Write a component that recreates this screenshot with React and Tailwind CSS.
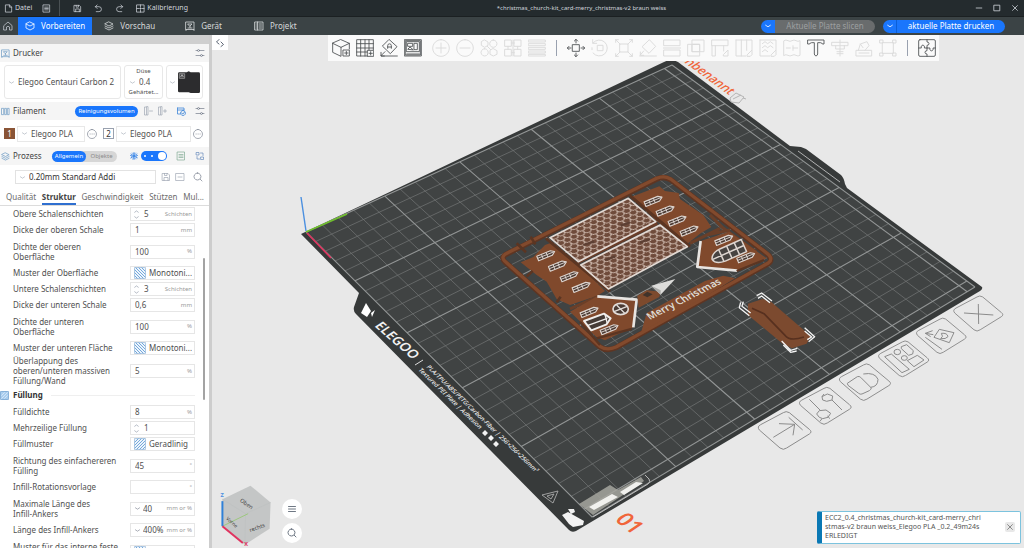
import React from "react";
import clsx from "clsx";

const TOOL_ICONS = {
  addCube: "M27 2 52 13 27 25 2 13ZM2 13V40L27 52V25M52 13V30M34 33H52V51H34ZM43 37V47M38 42H48",
  addPlate: "M34 51H2V2H52V32M14 2V51M27 2V51M39 2V32M2 14H52M2 27H52M2 39H34M35 34H53V52H35ZM44 38V48M39 43H49",
  orient: "M28 2 51 23 31 44 8 22ZM23 28V20A5 5 0 0 1 34 20V28M23 24H34M4 51H52M15 38 3 50M3 40V51H13",
  arrange: "M2 2H52V51H2ZM8 8H46V38H8ZM8 45H46M12 13H26V22H12ZM31 13H40V32H31ZM12 30 18 24 27 32ZM5 5H49V48H5Z",
  plus: "M27 2A25 25 0 1 1 26.9 2ZM27 12V42M12 27H42",
  minus: "M27 2A25 25 0 1 1 26.9 2ZM12 27H42",
  copies: "M14 3 24 9V19L14 25 4 19V9ZM40 3A11 11 0 1 1 39.9 3ZM14 29A11 11 0 1 1 13.9 29ZM40 29 51 35V46L40 51 30 46V35ZM22 22 32 32",
  split: "M3 3H22V22H3ZM31 3H51V22H31ZM3 31H22V51H3ZM31 31H51V51H31ZM22 12H31M22 41H31M12 22V31M41 22V31M27 3V51",
  layers: "M2 3H52V9H2ZM2 14H52V20H2ZM2 25H52V31H2ZM2 36H52V42H2ZM2 46H52V51H2Z",
  move: "M17 17H37V37H17ZM27 12V1M22 6 27 1 32 6M27 42V53M22 48 27 53 32 48M12 27H1M6 22 1 27 6 32M42 27H53M48 22 53 27 48 32",
  rotate: "M20 19H36V35H20ZM6 12A24 24 0 1 1 6 42M5 2V13H17M3 26V32",
  scale: "M15 15H39V39H15ZM15 15 2 2M2 10V2H10M39 15 52 2M44 2H52V10M15 39 2 52M2 44V52H10M39 39 52 52M44 52H52V44",
  flat: "M32 3 50 22 30 43 10 24ZM2 51H52M14 36 4 48M4 39V49H14",
  cut: "M3 3H51V20H3ZM3 33H51V51H3ZM1 27H53",
  boolean: "M16 3H51V38H16ZM3 16H38V51H3ZM16 16H38V38H16Z",
  support: "M3 3H51V20H3ZM3 20V51H13V20M38 20V36M38 46 51 33V51H38Z",
  seam: "M3 3H51V32M3 3V51H32M19 3V51M35 3V34M37 47 51 33V47L46 52H37Z",
  paint: "M3 3H51V32M3 3V51H32M10 14 18 8 26 14 34 8 42 14M10 26 18 20 26 26 34 20 42 26M10 38 18 32 26 38M37 47 51 33V47L46 52H37Z",
  fuzzy: "M3 5Q9 1 15 5T27 5T39 5T51 5V49Q45 53 39 49T27 49T15 49T3 49ZM10 27H22M30 27H44M30 20V34",
  text: "M3 3H51V15H46Q45 11 40 11H32V45Q32 49 27 51Q22 49 22 45V11H14Q9 11 8 15H3Z",
  measure: "M27 3V51M3 10H51V20H3ZM14 20V30H40V20M18 38H36M18 44H36",
  assembly: "M4 34H50V51H4ZM10 34 16 15 36 8 42 20 30 34M16 15 24 26M12 42H42",
  brim: "M11 11H43V43H11ZM3 3H12V12H3ZM42 3H51V12H42ZM3 42H12V51H3ZM42 42H51V51H42Z",
  puzzle: "M6 2H48Q52 2 52 6V48Q52 52 48 52H6Q2 52 2 48V6Q2 2 6 2ZM27 2V9A6 5 0 1 1 27 19V27M2 27H10A5 6 0 1 1 19 27H36A5 6 0 1 0 45 27H52M27 27V35A6 5 0 1 0 27 45V52",
};

const TOOL_GROUPS = [
  [["addCube", "Objekt hinzufügen", 1], ["addPlate", "Platte hinzufügen", 1], ["orient", "Ausrichten", 1], ["arrange", "Anordnen", 1]],
  [["plus", "Mehr"], ["minus", "Weniger"], ["copies", "Kopien"], ["split", "Teilen"], ["layers", "Schichthöhe"]],
  [
    ["move", "Bewegen", 1], ["rotate", "Drehen"], ["scale", "Skalieren"], ["flat", "Auf Fläche legen"], ["cut", "Schneiden"],
    ["boolean", "Boolesch"], ["support", "Stützen malen"], ["seam", "Naht malen"], ["paint", "Farbe malen"], ["fuzzy", "Fuzzy Skin"],
    ["text", "Text", 1], ["measure", "Messen"], ["assembly", "Montage"], ["brim", "Brim"],
  ],
  [["puzzle", "Baugruppe", 1]],
];

const SETTINGS = [
  { label: "Obere Schalenschichten", value: "5", unit: "Schichten", kind: "spin" },
  { label: "Dicke der oberen Schale", value: "1", unit: "mm" },
  { label: "Dichte der oberen Oberfläche", value: "100", unit: "%", lines: 2 },
  { label: "Muster der Oberfläche", value: "Monotoni...", kind: "pattern" },
  { label: "Untere Schalenschichten", value: "3", unit: "Schichten", kind: "spin" },
  { label: "Dicke der unteren Schale", value: "0,6", unit: "mm" },
  { label: "Dichte der unteren Oberfläche", value: "100", unit: "%", lines: 2 },
  { label: "Muster der unteren Fläche", value: "Monotoni...", kind: "pattern" },
  { label: "Überlappung des oberen/unteren massiven Füllung/Wand", value: "5", unit: "%", lines: 3 },
  { section: "Füllung" },
  { label: "Fülldichte", value: "8", unit: "%" },
  { label: "Mehrzeilige Füllung", value: "1", kind: "spin" },
  { label: "Füllmuster", value: "Geradlinig", kind: "pattern", flip: true },
  { label: "Richtung des einfachereren Fülling", value: "45", unit: "°", lines: 2 },
  { label: "Infill-Rotationsvorlage", value: "", unit: "°" },
  { label: "Maximale Länge des\nInfill-Ankers", value: "40", unit: "mm or %", kind: "combo", lines: 2 },
  { label: "Länge des Infill-Ankers", value: "400%", unit: "mm or %", kind: "combo" },
  { label: "Muster für das interne feste Füllung", value: "Monotoni...", kind: "pattern", lines: 2 },
];

function Icon({ d, size = "size-[10px]", box = 20, sw = 1.6, className }) {
  return (
    <svg viewBox={`0 0 ${box} ${box}`} className={clsx(size, "shrink-0", className)} fill="none" stroke="currentColor" strokeWidth={sw} strokeLinejoin="round" strokeLinecap="round" aria-hidden="true">
      <path d={d} />
    </svg>
  );
}

function IconButton({ label, className, ...icon }) {
  return (
    <button type="button" aria-label={label} className={clsx("flex items-center justify-center", className)}>
      <Icon {...icon} />
    </button>
  );
}

const D = {
  file: "M4 2H12L17 7V18H4ZM12 2V7H17",
  list: "M3 2H17V18H3ZM6 7H14M6 10H14M6 13H14",
  save: "M3 3H14L17 6V17H3ZM6 17V11H14V17M7 3V7H12V3",
  undo: "M7 2 3 6 7 10M3 6H11A5 5 0 0 1 11 17H5",
  redo: "M13 2 17 6 13 10M17 6H9A5 5 0 0 0 9 17H15",
  calib: "M2 2H18V18H2ZM10 2V7M10 13V18M2 10H7M13 10H18M10 9V11M9 10H11",
  home: "M2 9 10 2 18 9V18H13V12Q10 9 7 12V18H2Z",
  cube: "M10 2 18 6V14L10 18 2 14V6ZM2 6 10 10 18 6",
  stack: "M10 2 18 6 10 10 2 6ZM2 10 10 14 18 10M2 14 10 18 18 14",
  device: "M2 2H18V17H2ZM6 6H14L10 10ZM10 10V13M6 14H14M2 17V19M18 17V19",
  project: "M2 2H18V18H2ZM7 2V18M10 6H15M10 10H15M10 14H15M4 6H5M4 10H5M4 14H5",
  chev: "M4 8 10 12 16 8",
  sliders: "M2 5H5M9 5A2 2 0 1 0 5 5 2 2 0 1 0 9 5M9 5H18M2 15H11M15 15A2 2 0 1 0 11 15 2 2 0 1 0 15 15M15 15H18",
  filament: "M2 3H6V17H2ZM9 3H12V17H9ZM15 3H18V17H15Z",
  remove: "M6 2H3V18H6M10 2V18H7V2ZM13 10H19",
  add: "M6 2H3V18H6M10 2V18H7V2ZM13 10H19M16 7V13",
  sync: "M3 4H16V8M3 4V16H8M3 8H16M14 9A5 5 0 1 1 13.9 9ZM11 14 14 16 17 12",
  swap: "M3 3H8V8H3ZM12 12H17V17H12ZM11 4H16V9M9 16H4V11",
  more: "M10 1A9 9 0 1 1 9.9 1ZM6 10H6.5M10 10H10.5M14 10H14.5",
  minusBox: "M2 3H18V17H2ZM6 10H14",
  search: "M9 2A7 7 0 1 1 8.9 2ZM14 14 18 18",
  flower: "M10 10 10 3M10 10 16 6M10 10 16 14M10 10V17M10 10 4 14M10 10 4 6M7 4 10 7 13 4M7 16 10 13 13 16M3 9 7 10 4 13M17 9 13 10 16 13",
  x: "M4 4 16 16M16 4 4 16",
};

function TitleBar() {
  return (
    <header className="flex h-4 shrink-0 items-center bg-[#242b2e] text-[7px] text-gray-300">
      <div className="flex h-full items-center pl-1">
        <button type="button" className="flex items-center gap-[2px]"><Icon d={D.file} size="size-[9px]" />Datei</button>
        <IconButton label="Menü" d={D.list} size="size-[9px]" className="ml-[10px]" />
        <span className="mr-[13px] ml-2 h-full w-px bg-[#4a5154]" />
        <IconButton label="Speichern" d={D.save} size="size-[9px]" />
        <IconButton label="Rückgängig" d={D.undo} size="size-[9px]" className="ml-3" />
        <IconButton label="Wiederholen" d={D.redo} size="size-[9px]" className="ml-3" />
        <button type="button" className="ml-3 flex items-center gap-[2px]"><Icon d={D.calib} size="size-[9px]" />Kalibrierung</button>
      </div>
      <h1 className="min-w-0 flex-1 truncate text-center text-[6px] leading-[12px]">*christmas_church-kit_card-merry_christmas-v2 braun weiss</h1>
      <div className="flex items-center gap-[10px] pr-[5px]">
        <IconButton label="Minimieren" d="M3 10H17" size="size-[8px]" sw={2} />
        <IconButton label="Maximieren" d="M3 3H17V17H3Z" size="size-[8px]" sw={2} />
        <IconButton label="Schließen" d={D.x} size="size-[8px]" sw={2} />
      </div>
    </header>
  );
}

function MainNav() {
  const tab = "flex items-center gap-[6px] self-stretch text-[#d5d9da]";
  return (
    <nav className="flex h-[19px] shrink-0 items-center border-t border-[#1b2022] bg-[#3b4345] text-[8px]">
      <IconButton label="Start" d={D.home} className="w-[18px] pr-[3px] text-gray-300" sw={1.4} />
      <button type="button" className={clsx(tab, "bg-[#1a76fc] pr-[7px] pl-[7px] text-white")}><Icon d={D.cube} />Vorbereiten</button>
      <button type="button" className={clsx(tab, "ml-3")}><Icon d={D.stack} />Vorschau</button>
      <button type="button" className={clsx(tab, "ml-[30px]")}><Icon d={D.device} />Gerät</button>
      <button type="button" className={clsx(tab, "ml-8")}><Icon d={D.project} />Projekt</button>
      <div className="ml-auto flex gap-2 pr-[19px]">
        <div className="flex h-[13px] w-[114px] overflow-hidden rounded-full">
          <IconButton label="Slice-Optionen" d={D.chev} size="size-[8px]" sw={2} className="w-[14px] bg-[#1a76fc] text-white" />
          <button type="button" disabled className="flex-1 bg-[#696c6d] text-[#9c9fa0]">Aktuelle Platte slicen</button>
        </div>
        <div className="flex h-[13px] w-[122px] overflow-hidden rounded-full bg-[#1a76fc] text-white">
          <IconButton label="Druckoptionen" d={D.chev} size="size-[8px]" sw={2} className="w-[14px] border-r border-[#0c5fd6]" />
          <button type="button" className="flex-1">aktuelle Platte drucken</button>
        </div>
      </div>
    </nav>
  );
}

function PanelHeader({ icon, title, children }) {
  return (
    <div className="flex h-[18px] shrink-0 items-center bg-[#f5f5f5] pr-[4px] pl-[1px]">
      <Icon d={icon} className="text-[#6f9cc4]" size="size-[9px]" />
      <h2 className="ml-[3px] text-[8px] text-[#444]">{title}</h2>
      <div className="ml-auto flex items-center">{children}</div>
    </div>
  );
}

function Select({ label, value, className }) {
  return (
    <div className={clsx("flex min-w-0 items-center", className)}>
      <Icon d={D.chev} size="size-[7px]" className="mr-[3px] text-gray-400" />
      <select aria-label={label} className="min-w-0 flex-1 appearance-none truncate bg-transparent outline-none">
        <option>{value}</option>
      </select>
    </div>
  );
}

function PatternSwatch({ flip }) {
  return (
    <svg viewBox="0 0 36 36" className={clsx("size-3 shrink-0", flip && "-scale-x-100")} aria-hidden="true">
      <rect x="1" y="1" width="34" height="34" rx="3" fill="#eef5fc" stroke="#7ca6cf" strokeWidth="2" />
      <path d="M2 26 10 34M2 17 19 34M2 8 28 34M5 2 34 31M14 2 34 22M23 2 34 13" stroke="#5f9bd6" strokeWidth="2.6" />
    </svg>
  );
}

function SettingRow({ label, value, unit, kind, lines = 1, flip }) {
  const id = label.replace(/\W+/g, "-");
  return (
    <div className={clsx("flex shrink-0 items-center", lines === 1 && "h-4", lines === 2 && "h-[27px]", lines === 3 && "h-[30px]")}>
      <label htmlFor={id} className="w-[117px] shrink-0 pr-[6px] leading-[10px] whitespace-pre-line">{label}</label>
      <div className="flex h-[14px] min-w-0 flex-1 items-center border border-[#e6e6e6] bg-white pr-[2px] pl-[4px]">
        {kind === "spin" && <Icon d="M6 5 10 2 14 5M6 15 10 18 14 15" size="size-[9px]" className="mr-[3px] -ml-[3px] text-gray-400" />}
        {kind === "combo" && <Icon d={D.chev} size="size-[7px]" className="mr-[2px] -ml-px text-gray-500" />}
        {kind === "pattern" ? (
          <>
            <span className="mr-[3px] -ml-px"><PatternSwatch flip={flip} /></span>
            <select id={id} className="min-w-0 flex-1 appearance-none bg-transparent outline-none"><option>{value}</option></select>
          </>
        ) : (
          <input id={id} defaultValue={value} className="min-w-0 flex-1 bg-transparent outline-none" />
        )}
        {unit && <span className="shrink-0 text-[6px] text-[#999]">{unit}</span>}
      </div>
    </div>
  );
}

function Sidebar() {
  return (
    <aside className="flex w-[212px] shrink-0 flex-col overflow-hidden border-r-[3px] border-[#cdcdcd] bg-white text-[8px] text-[#505050]">
      <div className="h-[9px] shrink-0 bg-[#cfcfcf]" />
      <PanelHeader icon={D.device} title="Drucker">
        <IconButton label="Druckereinstellungen" d={D.sliders} className="text-gray-500" sw={1.3} />
      </PanelHeader>
      <div className="flex h-10 shrink-0 items-stretch gap-[3px] py-[3px] pr-[6px] pl-[4px]">
        <Select label="Drucker" value="Elegoo Centauri Carbon 2" className="flex-1 rounded-[3px] border border-[#e8e8e8] pl-[3px]" />
        <div className="flex w-[39px] shrink-0 flex-col items-center justify-between rounded-[3px] border border-[#e8e8e8] py-px">
          <span className="text-[6px] leading-[9px]">Düse</span>
          <Select label="Düse" value="0.4" className="w-[29px] leading-[10px]" />
          <span className="text-[6px] leading-[9px]">Gehärtet...</span>
        </div>
        <button type="button" aria-label="Plattentyp" className="flex w-[37px] shrink-0 items-center justify-between rounded-[3px] border border-[#e8e8e8] px-[2px]">
          <Icon d={D.chev} size="size-[7px]" className="text-gray-400" />
          <svg viewBox="0 0 66 68" className="w-[22px]" aria-hidden="true">
            <path d="M4 4H26L32 1 38 4H62Q66 4 66 8V62Q66 66 62 66H38L32 64H4Q0 64 0 60V8Q0 4 4 4Z" fill="#2c2c2e" />
            <path d="M4 8H20V22H4Z" fill="#4a4a4c" stroke="#aaa" strokeWidth="2" />
            <path d="M8 18 12 11 16 18" stroke="#ddd" strokeWidth="2" fill="none" />
          </svg>
        </button>
      </div>

      <PanelHeader icon={D.filament} title="Filament">
        <button type="button" className="h-[11px] w-[63px] rounded-full bg-[#1a76fc] text-[6px] text-white">Reinigungsvolumen</button>
        <IconButton label="Filament entfernen" d={D.remove} className="ml-[5px] text-gray-400" sw={1.3} />
        <IconButton label="Filament hinzufügen" d={D.add} className="ml-1 text-gray-400" sw={1.3} />
        <IconButton label="Synchronisieren" d={D.sync} className="ml-[9px] text-[#3f86d8]" />
        <IconButton label="Filamenteinstellungen" d={D.sliders} className="ml-[9px] text-gray-500" sw={1.3} />
      </PanelHeader>
      <div className="flex h-[27px] shrink-0 items-center pr-[6px] pl-[4px]">
        <span className="flex size-[11px] items-center justify-center bg-[#8a5436] text-white">1</span>
        <Select label="Filament 1" value="Elegoo PLA" className="ml-[2px] h-4 w-[68px] border border-[#e8e8e8] pl-[3px]" />
        <IconButton label="Filament 1 bearbeiten" d={D.more} className="ml-[2px] text-gray-500" sw={1.2} />
        <span className="ml-[6px] flex size-[11px] items-center justify-center border border-gray-400 text-[#333]">2</span>
        <Select label="Filament 2" value="Elegoo PLA" className="ml-[2px] h-4 flex-1 border border-[#e8e8e8] pl-[3px]" />
        <IconButton label="Filament 2 bearbeiten" d={D.more} className="ml-[2px] text-gray-500" sw={1.2} />
      </div>

      <PanelHeader icon={D.stack} title="Prozess">
        <div className="flex h-[11px] w-[65px] rounded-full bg-[#d6d6d6] text-[6px]">
          <button type="button" className="w-[34px] rounded-full bg-[#1a76fc] text-white">Allgemein</button>
          <button type="button" className="flex-1 text-[#8b8b8b]">Objekte</button>
        </div>
        <Icon d={D.flower} className="ml-3 text-[#2f7fe6]" />
        <label className="ml-[2px] flex h-[10px] w-[26px] items-center justify-end gap-[5px] rounded-full bg-[#1a76fc] pr-px">
          <input type="checkbox" defaultChecked aria-label="Erweiterte Einstellungen" className="sr-only" />
          <span className="size-[2px] rounded-full bg-white" />
          <span className="size-[2px] rounded-full bg-white" />
          <span className="size-2 rounded-full bg-white" />
        </label>
        <IconButton label="Vergleichen" d={D.list} className="ml-[9px] text-[#79a58c]" sw={1.3} />
        <IconButton label="Tauschen" d={D.swap} className="ml-[9px] text-[#5c84b8]" sw={1.3} />
      </PanelHeader>
      <div className="flex h-6 shrink-0 items-center pr-[6px] pl-[15px]">
        <Select label="Profil" value="0.20mm Standard Addi" className="h-[14px] flex-1 border border-[#e2e2e2] pl-[3px] text-[#333]" />
        <IconButton label="Profil speichern" d={D.save} className="ml-[5px] text-gray-400" sw={1.3} />
        <IconButton label="Profil löschen" d={D.minusBox} className="ml-1 text-gray-400" sw={1.3} />
        <IconButton label="Suchen" d={D.search} className="ml-2 text-gray-500" sw={1.3} />
      </div>
      <div className="flex h-[17px] shrink-0 justify-between border-b border-[#dcdcdc] pr-[5px] pl-[6px] text-[#6c6c6c]">
        <button type="button">Qualität</button>
        <button type="button" className="border-y-2 border-t-transparent border-b-[#2f6fd0] font-bold text-[#444]">Struktur</button>
        <button type="button">Geschwindigkeit</button>
        <button type="button">Stützen</button>
        <button type="button">Mul...</button>
      </div>

      <div className="flex min-h-0 flex-1">
        <div className="flex min-w-0 flex-1 flex-col overflow-hidden pr-2 pl-[13px]">
          {SETTINGS.map((s) =>
            s.section ? (
              <div key={s.section} className="-ml-[13px] flex h-[18px] shrink-0 items-center">
                <svg viewBox="0 0 27 27" className="size-[9px]" aria-hidden="true">
                  <rect x="1" y="1" width="25" height="25" rx="3" fill="#a9cdee" stroke="#5a8fc4" strokeWidth="2" />
                  <path d="M4 14 14 4M4 23 23 4M13 23 23 13" stroke="#e8f2fc" strokeWidth="2" />
                </svg>
                <h3 className="ml-1 font-bold text-[#333]">{s.section}</h3>
                <span className="ml-2 h-px flex-1 bg-[#efefef]" />
              </div>
            ) : (
              <SettingRow key={s.label} {...s} />
            )
          )}
        </div>
        <div className="w-[6px] shrink-0 pt-[52px]">
          <div className="h-[142px] w-[2px] rounded-full bg-[#a3a3a3]" />
        </div>
      </div>
    </aside>
  );
}

// Projects bed coordinates (mm, 0..256) onto the canvas.
function bedPoint(x, y) {
  const [x0, y0, x1, y1, x2, y2, x3, y3] = [306, 232, 592, 517, 975, 287, 672, 65];
  const [dx1, dy1, dx2, dy2] = [x1 - x2, y1 - y2, x3 - x2, y3 - y2];
  const [sx, sy] = [x0 - x1 + x2 - x3, y0 - y1 + y2 - y3];
  const den = dx1 * dy2 - dx2 * dy1;
  const g = (sx * dy2 - dx2 * sy) / den;
  const h = (dx1 * sy - sx * dy1) / den;
  const [u, v] = [x / 256, y / 256];
  const w = g * u + h * v + 1;
  return [
    ((x1 - x0 + g * x1) * u + (x3 - x0 + h * x3) * v + x0) / w,
    ((y1 - y0 + g * y1) * u + (y3 - y0 + h * y3) * v + y0) / w,
  ];
}

function line(a, b) {
  return `M${bedPoint(...a).join(" ")}L${bedPoint(...b).join(" ")}`;
}

const STEPS = [...Array(26).keys()].map((i) => i * 10);
const gridPath = (steps) => steps.map((s) => line([s, 0], [s, 256]) + line([0, s], [256, s])).join("");
const THIN = gridPath(STEPS.filter((s) => s % 50));
const BOLD = gridPath([...STEPS.filter((s) => s % 50 === 0), 256]);

function KitWindow({ x, y }) {
  return (
    <g transform={`translate(${x} ${y}) rotate(-22)`}>
      <path d="M-27 -7H17L28 0 17 8H-27Z" fill="#4a3a33" stroke="#ddd5d0" strokeWidth="3.4" />
      <path d="M-27 0H26M-12 -7V8M3 -7V8" stroke="#ddd5d0" strokeWidth="2.6" />
    </g>
  );
}

function ChurchKit() {
  return (
    <>
      <defs>
        <pattern id="tiles" width="22" height="26" patternUnits="userSpaceOnUse" patternTransform="rotate(-26) skewX(20)">
          <path d="M0 2Q0 13 11 13T22 2M-11 15Q-11 26 0 26T11 15Q11 26 22 26T33 15" fill="none" stroke="#d3bfb3" strokeWidth="2.8" />
          <path d="M11 13V15M0 0V2M22 0V2" stroke="#d3bfb3" strokeWidth="2.8" />
        </pattern>
      </defs>
      <g transform="translate(490 165) scale(0.3333)" strokeLinejoin="round">
        <path d="M48 268 500 42Q522 32 542 44L835 270Q850 285 835 296L378 548Q350 560 330 546L44 290Q32 278 48 268Z" fill="none" stroke="#5f3522" strokeWidth="16" />
        <path d="M48 266 500 40Q522 30 542 42L835 268Q850 283 835 294L378 546Q350 558 330 544L44 288Q32 276 48 266Z" fill="none" stroke="#824a2d" strokeWidth="10" />
        <path d="M92 292 130 276 165 240 182 234 268 300 345 378 322 392 240 420 200 402 170 350 140 330Z" fill="#80492c" />
        <path d="M128 318 110 335M212 395 200 412M122 215 136 238M80 235 108 262" stroke="#5b3522" strokeWidth="8" />
        <path d="M425 95 508 64 525 78 566 84 570 102 640 150 664 186 632 205 590 238 500 168Z" fill="#80492c" />
        <path d="M420 92 600 245M168 220 360 380" stroke="#5b3522" strokeWidth="9" />
        <path d="M262 292 502 174" stroke="#6a3d28" strokeWidth="12" />
        <path d="M180 218 415 100 497 170 265 290ZM272 300 510 180 592 245 355 372Z" fill="#6f4b3b" />
        <path d="M180 218 415 100 497 170 265 290ZM272 300 510 180 592 245 355 372Z" fill="url(#tiles)" stroke="#e3dad4" strokeWidth="5" />
        <path d="M345 285 375 275M280 240 312 230M450 232 480 222M392 182 420 172" stroke="#5d4034" strokeWidth="7" />
        {[[168, 270], [203, 301], [238, 333], [274, 365], [490, 107], [526, 136], [562, 166], [598, 196]].map(([x, y]) => (
          <KitWindow key={`${x}-${y}`} x={x} y={y} />
        ))}
        <path d="M600 235 690 190M660 150 700 190 800 262M650 210 720 195M240 432 330 392" stroke="#6b3f28" strokeWidth="9" fill="none" />
        <path d="M632 228 718 200 830 280 745 318 622 306Z" fill="#80492c" />
        <path d="M632 228 622 306 742 317" fill="none" stroke="#e8e5e2" strokeWidth="8" />
        <KitWindow x={702} y={224} />
        <g transform="translate(716 262) rotate(-24)" stroke="#ddd5d0" strokeWidth="4.5">
          <path d="M50 -20H-20Q-50 -18 -54 0Q-50 18 -20 20H50Z" fill="#474341" />
          <path d="M-54 0H50M-24 -20V20M2 -20V20M27 -20V20" />
        </g>
        <KitWindow x={768} y={276} />
        <path d="M240 440 322 394 440 405 430 487 345 526 318 515Z" fill="#80492c" />
        <path d="M322 394 440 404 430 487" fill="none" stroke="#e8e5e2" strokeWidth="8" />
        <KitWindow x={298} y={440} />
        <KitWindow x={358} y={492} />
        <path d="M282 468 342 446 362 460 350 478 304 496Z" fill="#453b36" stroke="#f0eeec" strokeWidth="6" />
        <path d="M292 482 352 460M345 448 352 476" stroke="#f0eeec" strokeWidth="4" />
        <ellipse cx="392" cy="432" rx="23" ry="17" fill="#4a3a33" stroke="#e2dcd8" strokeWidth="5" />
        <path d="M372 440 412 424M380 420 404 445" stroke="#e2dcd8" strokeWidth="4" />
        <path d="M320 520 425 492M270 470 330 540M740 318 822 285" stroke="#5b3522" strokeWidth="7" />
        <path d="M442 392 470 376 512 380 508 396 446 428Z" fill="#7d4a2d" />
        <path d="M458 390 472 380 488 388 472 397Z" fill="#40332b" />
        <path d="M454 500 470 444 645 348 700 332 735 340 640 398Z" fill="#824a2d" />
        <path d="M484 362 556 342 512 389Z" fill="#dcdcda" />
        <path d="M484 362 512 376 512 389Z" fill="#a9a9a6" />

        <path d="M774 416 818 402 844 411 962 513 950 536 906 550 878 536 774 450Z" fill="#7c4a2f" />
        <path d="M786 430 822 446 886 512Q900 530 942 516" fill="none" stroke="#57301f" strokeWidth="5" />
        <path d="M800 392 815 384 846 408M804 400 815 393 840 413M752 412 748 428 778 452M760 410 756 424 782 444M944 488 974 515 956 530M944 498 965 516 952 524M875 528 902 556 922 550M880 540 902 562 920 558" fill="none" stroke="#f4f4f4" strokeWidth="4" />
      </g>
      <text transform="translate(650 320) rotate(-27) skewX(14)" fontSize="10" fontWeight="600" fill="#dedbd4">Merry Christmas</text>
    </>
  );
}

function Scene() {
  return (
    <svg viewBox="212 35 812 513" preserveAspectRatio="xMidYMid slice" className="absolute inset-0 size-full" fontFamily="'Noto Sans', sans-serif" role="img" aria-label="Druckplatte">
      <path d="M301 234 664 62Q671 58 678 62L790 146 801 147 806 149 841 175Q844 178 845 184L847 188 982 287Q983 289 980 291L576 531Q572 533 569 530L356 314Q353 311 354 307L359 293Z" fill="#373a3a" />
      <path d="M306 232 672 65 975 287 592 517Z" fill="#404343" />
      <path d={THIN} stroke="#747777" strokeWidth="0.7" fill="none" />
      <path d={BOLD} stroke="#929595" strokeWidth="1.1" fill="none" />
      <path d="M798 151 840 182" stroke="#d0d0d0" strokeWidth="0.8" />

      <path d="M306 231 301 197" stroke="#4a8fe0" strokeWidth="1.4" />
      <path d="M306 232 347 214" stroke="#6fbf2c" strokeWidth="1.6" />
      <path d="M307 233 331 258" stroke="#e0335f" strokeWidth="1.6" />

      <path d="M366 303 361 313 367 317 371 311ZM371 313 375 310 372 317Z" fill="#fff" />
      <g fill="#f2f2f2">
        <text transform="translate(374 326) rotate(41) skewX(-16)" fontSize="13" fontWeight="600">ELEGOO</text>
        <text transform="translate(426 367) rotate(44) skewX(-16)" fontSize="6" fontWeight="500">PLA/TPU/ABS/PETG/Carbon-Fiber | 256×256×256mm³</text>
        <text transform="translate(418 370) rotate(44) skewX(-16)" fontSize="6" fontWeight="500">Textured PEI Plate | Adhesion</text>
        <path d="M485 430 488 433 485 436 482 433ZM491 435 494 438 491 441 488 438ZM496 441 499 444 496 447 493 444Z" />
        <path d="M562 515 568 512 584 521 583 525 573 527 569 524ZM568 509 574 509 575 512 571 514Z" />
      </g>
      <path d="M423 360 415 365" stroke="#eee" strokeWidth="0.9" />
      <path d="M542 495 558 491 553 503ZM547 496 554 494 551 499Z" fill="none" stroke="#aaa" strokeWidth="0.9" />
      <path d="M579 504 610 485 618 490 641 477 644 481 593 515Z" fill="#a6a69f" opacity="0.85" />
      <path d="M589 507 612 494 618 497 594 510ZM620 492 636 482 643 483 624 495Z" fill="#f1f1ee" />
      <path d="M593 517 648 484Q651 482 649 479L645 475" fill="none" stroke="#c5c5c5" strokeWidth="0.9" />

      <g fill="#f0653a">
        <text transform="translate(614 520) rotate(38) skewX(-18)" fontSize="21" fontWeight="600">01</text>
        <text transform="translate(729 95) rotate(36) skewX(-22)" textAnchor="end" fontSize="12" fontWeight="500">Unbenannt</text>
      </g>
      <path d="M730 98 736 93 744 97 739 103 731 102ZM733 99 741 95M743 98 746 99" fill="none" stroke="#b5b5b5" strokeWidth="1" />

      <ChurchKit />

      <g transform="translate(740 280) scale(0.3333)" fill="none" stroke="#8b8b8b" strokeWidth="3" strokeLinejoin="round">
        {[[134, 452, 1], [256, 378, 0.98], [375, 307, 0.97], [491, 237, 0.95], [604, 168, 0.94], [715, 101, 0.93]].map(([x, y, s]) => (
          <path key={x} transform={`translate(${x} ${y}) scale(${s})`} d="M-72 -18 -4 -54Q4 -60 14 -54L74 -4Q84 4 74 10L6 52Q-4 60 -14 52L-76 -2Q-84 -12 -72 -18Z" />
        ))}
        <path d="M100 472 164 433M117 431 164 433 159 466M146 412 188 450" />
        <path d="M208 358 240 390M262 408 270 416M238 412 230 402 238 392 258 390 272 400 264 412 248 416ZM246 416 240 424M246 350 252 342M246 350 262 342 278 348 276 360 260 364 248 360ZM276 360 306 390" />
        <path d="M322 310 352 290Q358 288 362 292L394 324Q394 328 388 332L366 342Q360 344 356 340L324 316ZM370 282Q405 276 414 298Q414 320 392 322" />
        <path d="M434 230 454 222 508 268 486 278ZM462 216A10 8 0 1 0 482 216 10 8 0 1 0 462 216ZM484 234A9 7 0 1 0 502 234 9 7 0 1 0 484 234ZM484 200 500 194 520 212 518 222 506 226 484 206ZM502 242 532 226 552 240 522 260Z" />
        <path d="M582 172 598 148 642 158 628 188ZM604 160Q622 158 624 170 618 178 602 176Q612 170 604 160ZM556 172 606 208M578 152 556 160 572 170M556 160 580 164" />
        <path d="M672 99 760 105M715 72 716 132" />
      </g>
    </svg>
  );
}

function ViewCube() {
  return (
    <svg viewBox="0 0 190 200" className="h-[66px] w-[63px]" fontFamily="'Noto Sans', sans-serif" role="img" aria-label="Ansichtswürfel">
      <path d="M107 11 168 62 165 142 90 190 22 134V52Z" fill="#c4c6c6" />
      <path d="M22 52 92 96 168 62M92 96 90 190" fill="none" stroke="#bec0c0" strokeWidth="2" />
      <path d="M22 134 100 96" stroke="#9cc77c" strokeWidth="3" />
      <path d="M22 134V58" stroke="#2f80d8" strokeWidth="6" />
      <path d="M22 134 84 185" stroke="#e0335f" strokeWidth="6" />
      <g fill="#444" fontSize="17">
        <text transform="translate(74 58) rotate(36)">Oben</text>
        <text transform="translate(32 112) rotate(42)" fontSize="15">Vorne</text>
        <text transform="translate(106 152) rotate(-20)">rechts</text>
        <text x="16" y="46" fontWeight="700" fill="#4a8fe0">Z</text>
        <text x="88" y="194" fontWeight="700" fill="#e0335f">X</text>
      </g>
    </svg>
  );
}

function Toolbar() {
  return (
    <div className="flex h-[26px] items-center bg-[#fafafa] pl-px" role="toolbar">
      {TOOL_GROUPS.map((group, i) => (
        <React.Fragment key={i}>
          {i === 1 && <span className="w-1" />}
          {i > 1 && <span className="mx-[7px] h-4 w-px bg-gray-400" />}
          {group.map(([name, label, on]) => (
            <IconButton
              key={name}
              label={label}
              d={TOOL_ICONS[name]}
              box={54}
              sw={on ? 2.6 : 2.8}
              size="size-[18px]"
              className={clsx("h-6 w-6", on ? "text-[#4d5052]" : "text-[#dadada]")}
            />
          ))}
        </React.Fragment>
      ))}
    </div>
  );
}

function Toast() {
  return (
    <div role="status" className="absolute right-[3px] bottom-1 flex w-[204px] items-center rounded-[2px] border border-l-[5px] border-[#7cc3de] border-l-[#0a78b4] bg-white pt-px pr-[5px] pb-[3px] pl-[3px] text-[#555]">
      <p className="min-w-0 flex-1 text-[7px] leading-[9px]">
        ECC2_0.4_christmas_church-kit_card-merry_chri
        <br />
        stmas-v2 braun weiss_Elegoo PLA _0.2_49m24s
        <br />
        ERLEDIGT
      </p>
      <IconButton label="Meldung schließen" d={D.x} size="size-[8px]" className="size-[10px] rounded-[2px] bg-[#e8e8e8]" />
    </div>
  );
}

export default function App() {
  return (
    <div className="flex h-screen flex-col overflow-hidden bg-[#e8e8e8] font-['Noto_Sans',sans-serif]">
      <TitleBar />
      <MainNav />
      <div className="flex min-h-0 flex-1">
        <Sidebar />
        <main className="relative min-w-0 flex-1 overflow-hidden">
          <Scene />
          <div className="relative flex items-start">
            <IconButton label="Seitenleiste einklappen" d="M8 3 3 8 8 12M12 8 17 13 12 17" className="h-[15px] w-4 bg-white text-gray-700" />
            <div className="ml-[100px]"><Toolbar /></div>
          </div>
          <div className="absolute bottom-0 left-[3px]"><ViewCube /></div>
          <div className="absolute bottom-[5px] left-[70px] flex flex-col gap-1">
            <IconButton label="Ansichtsmenü" d="M3 5H17M3 10H17M3 15H17" className="size-5 rounded-full bg-white text-gray-600" />
            <IconButton label="Zoom" d={D.search} className="size-5 rounded-full bg-white text-gray-600" />
          </div>
          <Toast />
        </main>
      </div>
    </div>
  );
}
